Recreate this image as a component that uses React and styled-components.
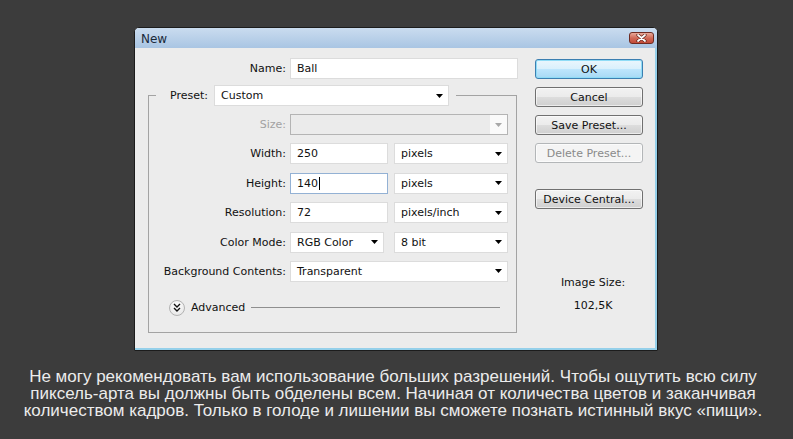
import React from 'react';
import styled, { createGlobalStyle } from 'styled-components';

const GlobalStyle = createGlobalStyle`
  html, body {
    margin: 0;
    padding: 0;
    background: #3c3c3c;
  }
  body {
    width: 793px;
    height: 439px;
    overflow: hidden;
  }
`;

const Page = styled.div`
  width: 793px;
  height: 439px;
  padding-top: 27px;
  box-sizing: border-box;
  display: flex;
  flex-direction: column;
`;

const Dialog = styled.div`
  margin-left: 134px;
  width: 524px;
  height: 324px;
  box-sizing: border-box;
  border: 1px solid #1c1c1c;
  border-radius: 5px 5px 0 0;
  background: #ececec;
  box-shadow: inset -2px -2px 0 #95d0ea;
  display: flex;
  flex-direction: column;
  font-family: 'DejaVu Sans', Verdana, sans-serif;
  font-size: 11px;
  color: #111;
`;

const TitleBar = styled.div`
  height: 20px;
  display: flex;
  align-items: flex-start;
  justify-content: space-between;
  padding: 0 3px 0 6px;
  border-radius: 4px 4px 0 0;
  background: linear-gradient(#cadcef, #a9c5e3);
`;

const Title = styled.span`
  margin-top: 4px;
  font-size: 12px;
  color: #1a2a3a;
`;

const CloseButton = styled.div`
  margin-top: 4px;
  width: 25px;
  height: 12px;
  box-sizing: border-box;
  border: 1px solid #6e2b22;
  border-radius: 3px;
  background: linear-gradient(#e9a999, #d06a58 50%, #c24a38);
  display: flex;
  align-items: center;
  justify-content: center;
`;

const Body = styled.div`
  flex: 1;
  display: flex;
  gap: 17px;
  padding: 10px 0 0 13px;
`;

const LeftColumn = styled.div`
  width: 370px;
  display: flex;
  flex-direction: column;
`;

const NameRow = styled.div`
  display: flex;
  align-items: center;
  height: 21px;
`;

const Label = styled.span`
  width: ${(p) => p.$width || 137}px;
  flex-shrink: 0;
  margin-right: 4px;
  text-align: right;
  white-space: nowrap;
  color: ${(p) => (p.$disabled ? '#a2a2a2' : '#111')};
`;

const Field = styled.div`
  width: ${(p) => p.$width}px;
  height: 21px;
  box-sizing: border-box;
  border: 1px solid ${(p) => (p.$focused ? '#93b1d4' : '#dcdcdc')};
  background: #fff;
  display: flex;
  align-items: center;
  padding-left: 6px;
  flex-shrink: 0;
`;

const Caret = styled.span`
  width: 1px;
  height: 13px;
  background: #000;
  margin-left: 1px;
`;

const Dropdown = styled.div`
  width: ${(p) => p.$width}px;
  height: 21px;
  box-sizing: border-box;
  border: 1px solid ${(p) => (p.$disabled ? '#b4b4b4' : '#dcdcdc')};
  background: ${(p) => (p.$disabled ? '#ebebeb' : '#fff')};
  display: flex;
  align-items: center;
  justify-content: space-between;
  padding-left: 6px;
  flex-shrink: 0;
  margin-left: ${(p) => p.$offset || 0}px;
`;

const ArrowBox = styled.span`
  width: 17px;
  height: 100%;
  display: flex;
  align-items: center;
  justify-content: center;
  background: ${(p) => (p.$disabled ? '#fafafa' : 'transparent')};
`;

const GroupBox = styled.fieldset`
  margin: 6px 0 0 0;
  padding: 8px 0 16px 0;
  width: 369px;
  box-sizing: border-box;
  border: 1px solid #a3a3a3;
  min-width: 0;
`;

const Legend = styled.legend`
  margin-left: 7px;
  padding: 0 7px 0 14px;
  display: flex;
  align-items: center;
  gap: 6px;
`;

const Rows = styled.div`
  display: flex;
  flex-direction: column;
  gap: 8.4px;
`;

const Row = styled.div`
  display: flex;
  align-items: center;
  height: 21px;
`;

const AdvancedRow = styled.div`
  display: flex;
  align-items: center;
  height: 16px;
  margin-top: 18px;
  padding: 0 16px 0 20px;
  gap: 6px;
`;

const RoundToggle = styled.span`
  width: 16px;
  height: 16px;
  box-sizing: border-box;
  border-radius: 50%;
  border: 1px solid #b3b3b3;
  background: radial-gradient(circle at 50% 35%, #ffffff, #e2e2e2);
  display: flex;
  align-items: center;
  justify-content: center;
`;

const Rule = styled.span`
  flex: 1;
  height: 1px;
  background: #8f8f8f;
`;

const RightColumn = styled.div`
  width: 108px;
  display: flex;
  flex-direction: column;
  padding-top: 1px;
`;

const Button = styled.div`
  height: 20px;
  box-sizing: border-box;
  margin-bottom: ${(p) => p.$gap ?? 8}px;
  border: 1px solid ${(p) => (p.$primary ? '#3c7fb1' : p.$disabled ? '#b3b6b8' : '#707070')};
  border-radius: 3px;
  background: ${(p) =>
    p.$primary
      ? 'linear-gradient(#eaf6fd, #d9f0fc 50%, #bee6fd 51%, #a7d9f5)'
      : p.$disabled
      ? '#f4f4f4'
      : 'linear-gradient(#f2f2f2, #ebebeb 50%, #dddddd 51%, #cfcfcf)'};
  box-shadow: ${(p) => (p.$primary ? 'inset 0 0 0 1px #8fdcf6' : 'inset 0 0 0 1px rgba(255,255,255,0.6)')};
  color: ${(p) => (p.$disabled ? '#8a8a8a' : '#111')};
  display: flex;
  align-items: center;
  justify-content: center;
`;

const SizeInfo = styled.div`
  margin-top: 67px;
  padding-left: 8px;
  display: flex;
  flex-direction: column;
  align-items: center;
  gap: 9px;
  line-height: 14px;
`;

const Caption = styled.p`
  margin: 17px 7px 0 0;
  text-align: center;
  font-family: 'Liberation Sans', Arial, sans-serif;
  font-size: 17px;
  line-height: 17px;
  color: #ececec;
`;

function Arrow({ disabled }) {
  return (
    <ArrowBox $disabled={disabled}>
      <svg width="7" height="4" viewBox="0 0 7 4">
        <polygon points="0,0 7,0 3.5,4" fill={disabled ? '#a8a8a8' : '#000'} />
      </svg>
    </ArrowBox>
  );
}

function Select({ width, value, disabled, offset }) {
  return (
    <Dropdown $width={width} $disabled={disabled} $offset={offset}>
      <span>{value}</span>
      <Arrow disabled={disabled} />
    </Dropdown>
  );
}

export default function App() {
  return (
    <>
      <GlobalStyle />
      <Page>
        <Dialog>
          <TitleBar>
            <Title>New</Title>
            <CloseButton>
              <svg width="11" height="8" viewBox="0 0 11 8">
                <path d="M2 1 L9 7 M9 1 L2 7" stroke="#5c2118" strokeWidth="3.2" strokeLinecap="round" />
                <path d="M2 1 L9 7 M9 1 L2 7" stroke="#fff" strokeWidth="1.8" strokeLinecap="round" />
              </svg>
            </CloseButton>
          </TitleBar>
          <Body>
            <LeftColumn>
              <NameRow>
                <Label $width={138}>Name:</Label>
                <Field $width={228}>Ball</Field>
              </NameRow>
              <GroupBox>
                <Legend>
                  <span>Preset:</span>
                  <Select width={235} value="Custom" />
                </Legend>
                <Rows>
                  <Row>
                    <Label $disabled>Size:</Label>
                    <Select width={218} value="" disabled />
                  </Row>
                  <Row>
                    <Label>Width:</Label>
                    <Field $width={98}>250</Field>
                    <Select width={114} value="pixels" offset={6} />
                  </Row>
                  <Row>
                    <Label>Height:</Label>
                    <Field $width={98} $focused>
                      140
                      <Caret />
                    </Field>
                    <Select width={114} value="pixels" offset={6} />
                  </Row>
                  <Row>
                    <Label>Resolution:</Label>
                    <Field $width={98}>72</Field>
                    <Select width={114} value="pixels/inch" offset={6} />
                  </Row>
                  <Row>
                    <Label>Color Mode:</Label>
                    <Select width={94} value="RGB Color" />
                    <Select width={114} value="8 bit" offset={10} />
                  </Row>
                  <Row>
                    <Label>Background Contents:</Label>
                    <Select width={218} value="Transparent" />
                  </Row>
                </Rows>
                <AdvancedRow>
                  <RoundToggle>
                    <svg width="8" height="9" viewBox="0 0 8 9">
                      <path d="M1 1 L4 4 L7 1 M1 5 L4 8 L7 5" stroke="#111" strokeWidth="1.4" fill="none" />
                    </svg>
                  </RoundToggle>
                  <span>Advanced</span>
                  <Rule />
                </AdvancedRow>
              </GroupBox>
            </LeftColumn>
            <RightColumn>
              <Button $primary>OK</Button>
              <Button>Cancel</Button>
              <Button>Save Preset...</Button>
              <Button $disabled $gap={26}>
                Delete Preset...
              </Button>
              <Button $gap={0}>Device Central...</Button>
              <SizeInfo>
                <span>Image Size:</span>
                <span>102,5K</span>
              </SizeInfo>
            </RightColumn>
          </Body>
        </Dialog>
        <Caption>
          Не могу рекомендовать вам использование больших разрешений. Чтобы ощутить всю силу
          <br />
          пиксель-арта вы должны быть обделены всем. Начиная от количества цветов и заканчивая
          <br />
          количеством кадров. Только в голоде и лишении вы сможете познать истинный вкус «пищи».
        </Caption>
      </Page>
    </>
  );
}
